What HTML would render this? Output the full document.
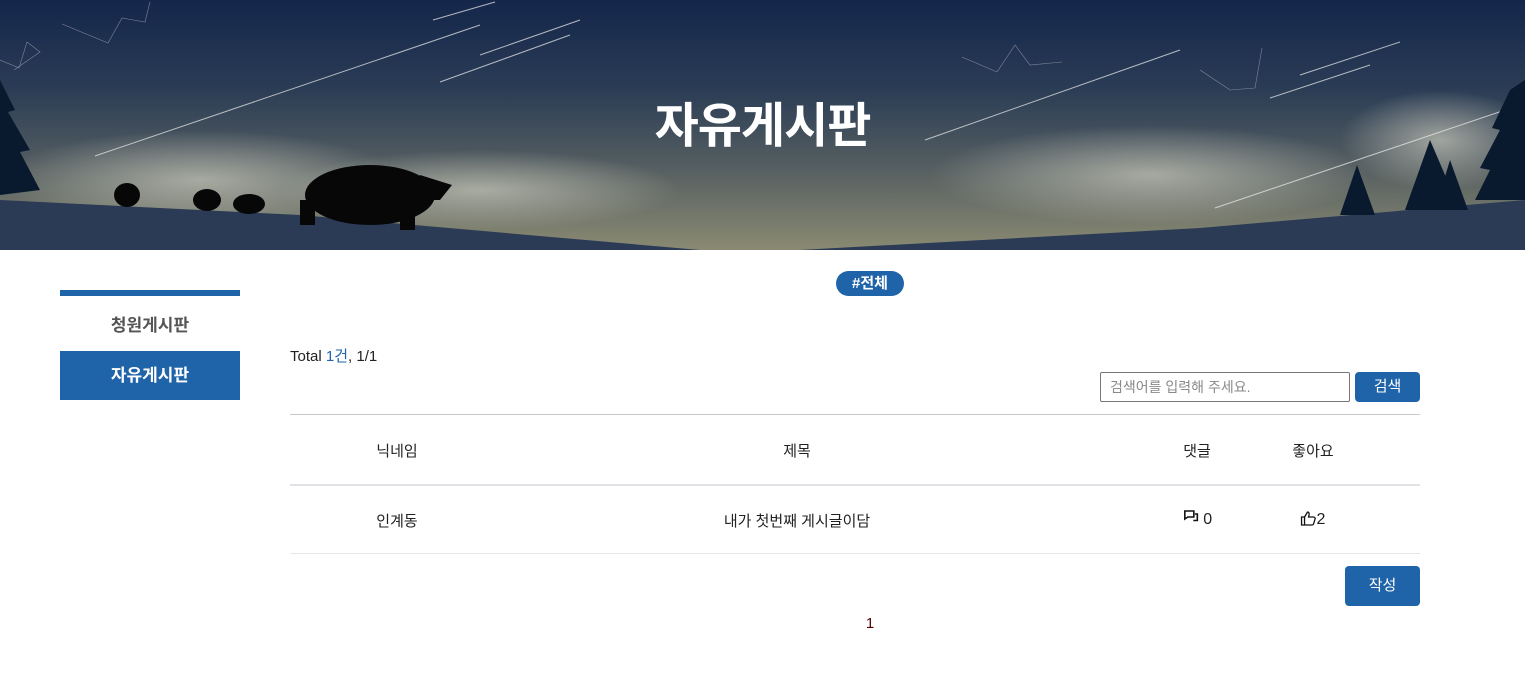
<!DOCTYPE html>
<html><head><meta charset="utf-8"><style>
*{margin:0;padding:0;box-sizing:border-box}
body{width:1525px;height:677px;background:#fff;font-family:"Liberation Sans","Noto Sans CJK KR",sans-serif;color:#222;position:relative;overflow:hidden}
.ban{position:absolute;left:0;top:0;width:1525px;height:250px;background:linear-gradient(180deg,#14264a 0%,#2a3c55 35%,#525c60 65%,#8a8a72 100%);overflow:hidden}
.ban h1{position:absolute;left:0;width:100%;top:86px;text-align:center;color:#fff;font-size:48px;font-weight:bold;letter-spacing:-1px}
.side{position:absolute;left:60px;top:290px;width:180px}
.side .bar{height:6px;background:#1f63a9}
.side .a{height:55px;line-height:60px;text-align:center;font-size:17px;font-weight:bold;color:#555}
.side .b{height:49px;line-height:49px;text-align:center;font-size:17px;font-weight:bold;color:#fff;background:#1f63a9}
.tag{position:absolute;left:836px;top:271px;width:68px;height:25px;border-radius:13px;background:#1f63a9;color:#fff;font-size:15px;font-weight:bold;text-align:center;line-height:25px}
.total{position:absolute;left:290px;top:345px;font-size:15px}
.total span{color:#1f63a9}
.inp{position:absolute;left:1100px;top:372px;width:250px;height:30px;border:1px solid #777;border-radius:2px;font-size:14px;color:#888;padding-left:9px;line-height:28px}
.sb{position:absolute;left:1355px;top:372px;width:65px;height:30px;background:#1f63a9;border-radius:4px;color:#fff;font-size:15px;text-align:center;line-height:30px}
.line{position:absolute;left:290px;width:1130px}
.c{position:absolute;font-size:15px;transform:translateX(-50%);white-space:nowrap}
.w{position:absolute;left:1345px;top:566px;width:75px;height:40px;background:#1f63a9;border-radius:4px;color:#fff;font-size:15px;text-align:center;line-height:40px}
</style></head><body>
<div class="ban">
<svg width="1525" height="250" style="position:absolute;left:0;top:0">
<defs><radialGradient id="cl"><stop offset="0" stop-color="#c8c8bc" stop-opacity=".7"/><stop offset="1" stop-color="#c8c8bc" stop-opacity="0"/></radialGradient></defs>
<ellipse cx="200" cy="180" rx="200" ry="50" fill="url(#cl)"/>
<ellipse cx="480" cy="190" rx="200" ry="40" fill="url(#cl)"/>
<ellipse cx="1150" cy="175" rx="220" ry="50" fill="url(#cl)"/>
<ellipse cx="1440" cy="140" rx="100" ry="50" fill="url(#cl)"/>
<g stroke="#e8e8e8" stroke-width="1" opacity=".75">
<line x1="95" y1="156" x2="480" y2="25"/><line x1="433" y1="20" x2="495" y2="2"/>
<line x1="480" y1="55" x2="580" y2="20"/><line x1="440" y1="82" x2="570" y2="35"/>
<line x1="925" y1="140" x2="1180" y2="50"/><line x1="1300" y1="75" x2="1400" y2="42"/>
<line x1="1270" y1="98" x2="1370" y2="65"/><line x1="1215" y1="208" x2="1520" y2="105"/>
</g>
<g stroke="#aab" stroke-width=".6" fill="none" opacity=".7"><polyline points="62,24 108,43 122,18 145,22 150,2"/><polyline points="0,60 19,68 27,42 40,52 14,70"/><polyline points="962,57 997,72 1015,45 1030,65 1062,62"/><polyline points="1200,70 1230,90 1255,88 1262,48"/></g>
<path d="M0 200 L300 215 L700 250 L0 250Z" fill="#2b3a55"/>
<path d="M800 250 L1200 228 L1525 200 L1525 250Z" fill="#2c3b55"/>
<g fill="#0a1a2e"><path d="M0 80 L15 110 L8 112 L30 150 L20 152 L40 190 L0 195Z"/><path d="M1510 90 L1525 80 L1525 200 L1475 200 L1490 170 L1480 168 L1500 130 L1492 128Z"/><path d="M1357 165 L1340 215 L1375 215Z"/><path d="M1430 140 L1405 210 L1460 210Z"/><path d="M1450 160 L1435 210 L1468 210Z"/></g>
<g fill="#070707"><ellipse cx="370" cy="195" rx="65" ry="30"/><path d="M420 175 L452 185 L440 200 L410 200Z"/><rect x="300" y="200" width="15" height="25"/><rect x="400" y="200" width="15" height="30"/>
<ellipse cx="127" cy="195" rx="13" ry="12"/><ellipse cx="207" cy="200" rx="14" ry="11"/><ellipse cx="249" cy="204" rx="16" ry="10"/></g>
</svg>
<h1>자유게시판</h1></div>
<div class="side"><div class="bar"></div><div class="a">청원게시판</div><div class="b">자유게시판</div></div>
<div class="tag">#전체</div>
<div class="total">Total <span>1건</span>, 1/1</div>
<div class="inp">검색어를 입력해 주세요.</div>
<div class="sb">검색</div>
<div class="line" style="top:414px;border-top:1px solid #c8c8c8"></div>
<div class="c" style="left:397px;top:440px">닉네임</div>
<div class="c" style="left:797px;top:440px">제목</div>
<div class="c" style="left:1197px;top:440px">댓글</div>
<div class="c" style="left:1313px;top:440px">좋아요</div>
<div class="line" style="top:484px;border-top:2px solid #e2e2e6"></div>
<div class="c" style="left:397px;top:510px">인계동</div>
<div class="c" style="left:797px;top:510px">내가 첫번째 게시글이담</div>
<div class="c" style="left:1198px;top:510px;font-size:16px"><svg width="15" height="13" viewBox="0 0 15 13" style="vertical-align:1px"><path d="M1 1h9v6H4l-3 2z" fill="none" stroke="#111" stroke-width="1.6"/><path d="M11 4h2.5v6.5h-4" fill="none" stroke="#111" stroke-width="1.6"/></svg> 0</div>
<div class="c" style="left:1313px;top:510px;font-size:16px"><svg width="16" height="16" viewBox="0 0 16 16" style="vertical-align:-2px"><path d="M1 7h3v8H1zM4 7l3-5c1 0 2 1 1.5 3L8 7h5c1 0 2 1 1.5 2l-1.5 5c-.3 1-1 1-2 1H4" fill="none" stroke="#111" stroke-width="1.3"/></svg>2</div>
<div class="line" style="top:553px;border-top:1px solid #e6e6e6"></div>
<div class="w">작성</div>
<div class="c" style="left:870px;top:615px;font-size:15px;color:#500">1</div>
</body></html>
